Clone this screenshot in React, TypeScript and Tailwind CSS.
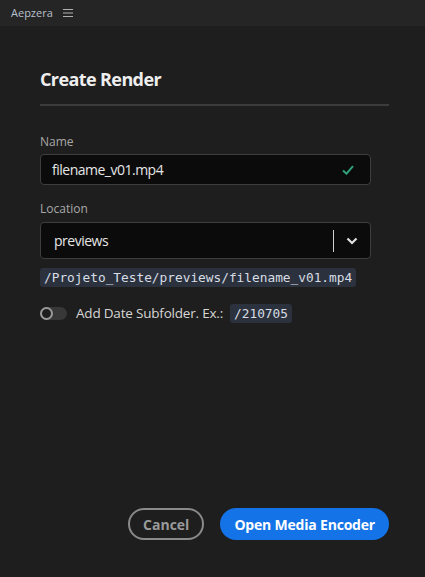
import React from "react";

export default function App() {
  const font = { fontFamily: '"Open Sans", "Noto Sans", sans-serif' };
  const mono = { fontFamily: '"DejaVu Sans Mono", "Liberation Mono", monospace' };
  return (
    <div className="w-[425px] h-[577px] bg-[#1e1e1e] flex flex-col text-[#e0e0e0]" style={font}>
      <div className="h-[26px] bg-[#252525] flex items-center pl-[11px] gap-[10px] shrink-0">
        <span className="text-[11px] text-[#b8c0cc]">Aepzera</span>
        <svg width="10" height="8" viewBox="0 0 10 8" className="text-[#b0b0b0]">
          <path d="M0 0.5h10M0 4h10M0 7.5h10" stroke="currentColor" strokeWidth="1" />
        </svg>
      </div>
      <div className="flex-1 flex flex-col px-[40px] pt-[42px] pb-[37px]">
        <h1 className="text-[18px] font-bold text-[#eeeeee] leading-[22px] tracking-[-0.6px]">Create Render</h1>
        <div className="mt-[14px] h-[2px] w-[349px] bg-[#3c3c3c]" />
        <label className="mt-[28px] text-[12px] leading-[16px] text-[#a8a8a8]">Name</label>
        <div className="mt-[4px] w-[331px] h-[31px] rounded-[4px] border border-[#3e3e3e] bg-[#0b0b0b] flex items-center pl-[11px] pr-[16px]">
          <span className="flex-1 text-[14px] text-[#e6e6e6] tracking-[-0.5px]">filename_v01.mp4</span>
          <svg width="12" height="10" viewBox="0 0 12 10">
            <path d="M1 5.5l3.5 3.2L11 1.2" fill="none" stroke="#2fa17a" strokeWidth="2" />
          </svg>
        </div>
        <label className="mt-[16px] text-[12px] leading-[16px] text-[#a8a8a8]">Location</label>
        <div className="mt-[5px] w-[331px] h-[37px] rounded-[4px] border border-[#3e3e3e] bg-[#0b0b0b] flex items-center pl-[13px]">
          <span className="flex-1 text-[14px] text-[#e6e6e6] tracking-[-0.5px]">previews</span>
          <div className="w-[1px] h-[22px] bg-[#d0d0d0]" />
          <div className="w-[36px] flex justify-center">
            <svg width="12" height="8" viewBox="0 0 12 8">
              <path d="M1.5 1.5l4.5 4.5 4.5-4.5" fill="none" stroke="#e0e0e0" strokeWidth="2.2" />
            </svg>
          </div>
        </div>
        <div className="mt-[9px] flex">
          <code className="bg-[#2b323d] rounded-[3px] px-[4px] text-[12.8px] leading-[19px] text-[#d8dde5]" style={mono}>
            /Projeto_Teste/previews/filename_v01.mp4
          </code>
        </div>
        <div className="mt-[16px] flex items-center h-[20px]">
          <div className="w-[27px] h-[13px] rounded-full bg-[#383838] relative">
            <div className="absolute left-[0px] top-[0px] w-[13px] h-[13px] rounded-full border-[2px] border-[#9a9a9a] bg-[#1e1e1e]" />
          </div>
          <span className="ml-[9px] text-[13.5px] text-[#d6d6d6] tracking-[-0.2px]">Add Date Subfolder. Ex.:</span>
          <code className="ml-[7px] bg-[#2b323d] rounded-[3px] px-[4px] text-[12.8px] leading-[19px] text-[#d8dde5]" style={mono}>
            /210705
          </code>
        </div>
        <div className="flex-1" />
        <div className="flex justify-end gap-[16px] mr-[-4px]">
          <button className="h-[32px] px-[13px] rounded-full border-[2px] border-[#8a8a8a] text-[14px] font-bold text-[#9a9a9a]">
            Cancel
          </button>
          <button className="h-[32px] px-[14px] rounded-full bg-[#1473e6] text-[14px] font-bold text-white tracking-[-0.2px]">
            Open Media Encoder
          </button>
        </div>
      </div>
    </div>
  );
}
